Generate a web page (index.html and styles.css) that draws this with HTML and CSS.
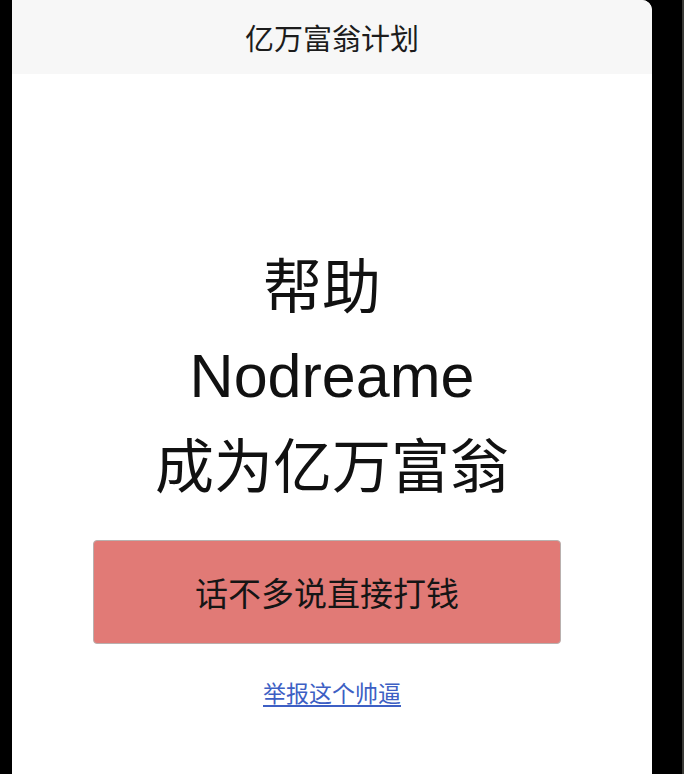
FILE: index.html
```html
<!DOCTYPE html>
<html lang="zh-CN">
<head>
<meta charset="utf-8">
<title>亿万富翁计划</title>
<link rel="stylesheet" href="styles.css">
</head>
<body>
<div class="phone">
  <div class="bezel-left"></div>
  <div class="screen">
    <header class="topbar">亿万富翁计划</header>
    <main class="content">
      <h1 class="headline">
        <span class="line first">帮助</span>
        <span class="line latin">Nodreame</span>
        <span class="line">成为亿万富翁</span>
      </h1>
      <button class="pay-btn" type="button">话不多说直接打钱</button>
      <a class="report" href="#">举报这个帅逼</a>
    </main>
  </div>
  <div class="bezel-right"></div>
</div>
</body>
</html>
```

FILE: styles.css
```css
html, body {
  margin: 0;
  padding: 0;
  background: #000;
  height: 100%;
  overflow: hidden;
}

.phone {
  display: flex;
  height: 774px;
  width: 684px;
}

.bezel-left {
  width: 12px;
  background: #000;
}

.screen {
  width: 640px;
  background: #fff;
  display: flex;
  flex-direction: column;
  border-top-right-radius: 10px;
  font-family: "Noto Sans CJK SC", "Noto Sans", sans-serif;
}

.bezel-right {
  width: 32px;
  background: #000;
  box-sizing: border-box;
  border-right: 2px solid #3a3a36;
}

.topbar {
  height: 74px;
  background: #f7f7f7;
  display: flex;
  align-items: center;
  justify-content: center;
  font-size: 29px;
  color: #1c1c1c;
  border-top-right-radius: 10px;
}

.content {
  display: flex;
  flex-direction: column;
  align-items: center;
  padding-top: 164px;
}

.headline {
  margin: 0;
  font-weight: 400;
  font-size: 59px;
  line-height: 90px;
  color: #111;
  display: flex;
  flex-direction: column;
  align-items: center;
}

.line {
  display: block;
  height: 90px;
}

.first {
  padding-right: 20px;
}

.latin {
  font-family: "Liberation Sans", Arial, sans-serif;
  font-size: 61px;
  padding-top: 3px;
  height: 87px;
}

.pay-btn {
  margin-top: 32px;
  margin-right: 10px;
  width: 468px;
  height: 104px;
  background: #e17a76;
  border: 1px solid #b9b0ae;
  border-radius: 4px;
  font-family: "Noto Sans CJK SC", "Noto Sans", sans-serif;
  font-size: 33px;
  color: #151515;
  padding: 0;
  cursor: pointer;
}

.report {
  margin-top: 33px;
  font-size: 23px;
  line-height: 30px;
  color: #3d5fc4;
  text-decoration: underline;
  text-underline-offset: 3px;
}
```
